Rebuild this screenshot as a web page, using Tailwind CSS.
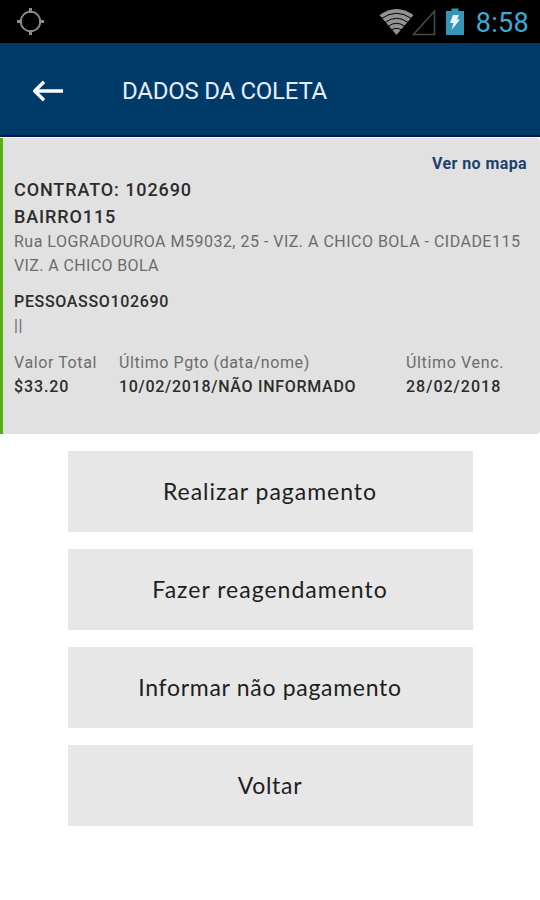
<!DOCTYPE html>
<html lang="pt-BR">
<head>
  <meta charset="UTF-8" />
  <meta name="viewport" content="width=device-width, initial-scale=1" />
  <title>Dados da Coleta</title>
  <script src="https://cdn.jsdelivr.net/npm/@tailwindcss/browser@4"></script>
</head>
<body class="bg-white min-h-screen font-['Roboto',sans-serif]">

  <!-- Status bar -->
  <div class="h-[43px] bg-black flex items-center justify-between pl-4 pr-[11px]">
    <svg class="w-[29px] h-[29px]" viewBox="0 0 29 29" fill="none" stroke="#8c8c8c">
      <circle cx="14.5" cy="14.5" r="9.8" stroke-width="1.8" />
      <path d="M14.5 1v5M14.5 23v5M1 14.5h5M23 14.5h5" stroke-width="3" />
    </svg>
    <div class="flex items-center">
      <svg class="w-[36px] h-[28px]" viewBox="0 0 36 28">
        <path d="M0.500 7Q17.500 -5 34.500 7L17.500 27Z" fill="#929292" />
        <path d="M2.500 10.500Q17.500 0 32.500 10.500M6 14.500Q17.500 6 29 14.500M9 18.500Q17.500 12 26 18.500M12 22.200Q17.500 18.500 23 22.200" fill="none" stroke="#000" stroke-width="1" />
      </svg>
      <svg class="-ml-[3px] w-[24px] h-[28px]" viewBox="0 0 24 28" fill="none" stroke="#4a4a4a" stroke-width="1.600">
        <path d="M22.500 3V26.500H1.500Z" />
      </svg>
      <svg class="ml-[10px] w-[18px] h-[28px]" viewBox="0 0 18 28">
        <path d="M5.500 0.500h7v2.500H18v24H0V3h5.500z" fill="#3696b7" />
        <path d="M7 7h6l-2 4.500h3L5.500 22l2-7H4z" fill="#e4f4fa" />
      </svg>
      <span class="ml-[12px] pt-[3px] text-[27px] leading-[40px] tracking-[0.3px] text-[#3fa9d4]">8:58</span>
    </div>
  </div>

  <!-- Header -->
  <header class="h-[94px] bg-[#003a69] border-b-2 border-[#08115a] flex items-center pl-8">
    <svg class="mt-[3px] w-[32px] h-[22px]" viewBox="0 0 32 22" fill="none" stroke="#fff" stroke-width="3.400">
      <path d="M2.500 11H31M12 1.800L2.700 11L12 20.200" stroke-linejoin="round" />
    </svg>
    <h1 class="ml-[58px] pt-[4px] text-[24px] leading-[30px] tracking-[-0.25px] text-[#e6eefa]">DADOS DA COLETA</h1>
  </header>

  <!-- Card -->
  <section class="mt-px h-[296px] bg-[#e1e1e1] border-l-3 border-[#55b010] rounded-r-[4px] pl-[11px] pr-[13px] pt-[14px] text-[16px] leading-[24px] text-[#6c6c6c]">
    <div class="text-right"><a href="#" class="font-bold tracking-[0.4px] text-[#1d3f70]">Ver no mapa</a></div>
    <h2 class="text-[18px] leading-[27px] font-medium tracking-[0.9px] text-[#2c2c2c]">CONTRATO: 102690</h2>
    <h2 class="text-[18px] leading-[27px] font-medium tracking-[0.9px] text-[#2c2c2c]">BAIRRO115</h2>
    <p class="whitespace-nowrap tracking-[0.49px]">Rua LOGRADOUROA M59032, 25 - VIZ. A CHICO BOLA - CIDADE115</p>
    <p class="tracking-[0.38px]">VIZ. A CHICO BOLA</p>
    <p class="mt-3 font-medium tracking-[0.67px] text-[#2c2c2c]">PESSOASSO102690</p>
    <p class="tracking-[0.5px]">||</p>
    <div class="mt-[13px] grid grid-cols-[105px_287px_1fr] whitespace-nowrap">
      <div>
        <p class="tracking-[0.6px]">Valor Total</p>
        <p class="font-medium tracking-[0.9px] text-[#2c2c2c]">$33.20</p>
      </div>
      <div>
        <p class="tracking-[0.58px]">Último Pgto (data/nome)</p>
        <p class="font-medium tracking-[0.7px] text-[#2c2c2c]">10/02/2018/NÃO INFORMADO</p>
      </div>
      <div>
        <p class="tracking-[0.65px]">Último Venc.</p>
        <p class="font-medium tracking-[1px] text-[#2c2c2c]">28/02/2018</p>
      </div>
    </div>
  </section>

  <!-- Actions -->
  <div class="mt-[17px] mx-auto w-[405px] flex flex-col gap-[17px] font-['Lato',sans-serif] text-[23px] text-[#1e1e1e]">
    <button class="h-[81px] bg-[#e7e7e7] tracking-[0.98px]">Realizar pagamento</button>
    <button class="h-[81px] bg-[#e7e7e7] tracking-[1px]">Fazer reagendamento</button>
    <button class="h-[81px] bg-[#e7e7e7] tracking-[0.7px]">Informar não pagamento</button>
    <button class="h-[81px] bg-[#e7e7e7] tracking-[0.7px]">Voltar</button>
  </div>

</body>
</html>
